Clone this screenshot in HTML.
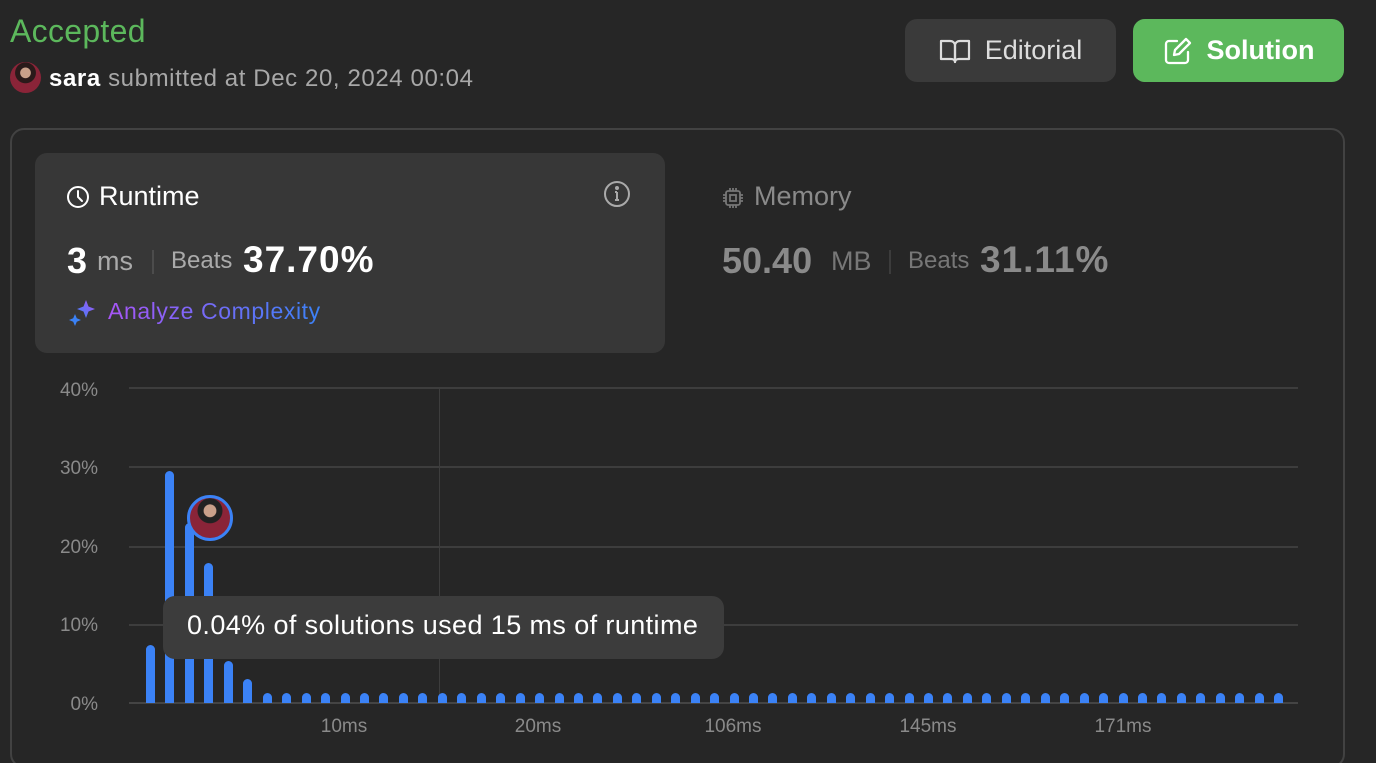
<!DOCTYPE html>
<html><head><meta charset="utf-8"><style>
*{margin:0;padding:0;box-sizing:border-box}
html,body{width:1376px;height:763px;overflow:hidden}
body{background:#262626;font-family:"Liberation Sans",sans-serif;position:relative;color:#eee}
.abs{position:absolute;white-space:nowrap}
.btn{position:absolute;top:19px;height:63px;border-radius:12px;display:flex;align-items:center;justify-content:center;font-size:27px;gap:14px}
.grid{position:absolute;left:129px;width:1169px;height:2px;background:#3d3d3d}
.yl{position:absolute;width:60px;left:38px;text-align:right;font-size:19px;color:#8a8a8a}
.xl{position:absolute;top:716px;font-size:19px;color:#8a8a8a;width:80px;text-align:center}
.bar{position:absolute;width:9px;background:#3b82f6;border-radius:5px 5px 0 0}
</style></head><body>
<div class="abs" style="left:10px;top:13px;font-size:32px;color:#5cb85c;letter-spacing:0.3px">Accepted</div>
<div class="abs" style="left:10px;top:62px;width:31px;height:31px;border-radius:50%;background:radial-gradient(circle at 50% 35%,#c9a08a 0 20%,#2a1a1a 22% 40%,#8a2438 42%);"></div>
<div class="abs" style="left:49px;top:65px;font-size:24px;letter-spacing:0.6px;color:#ddd"><b style="color:#fff">sara</b> <span style="color:#a8a8a8">submitted at Dec 20, 2024 00:04</span></div>

<div class="btn" style="left:905px;width:211px;background:#3a3a3a;color:#ddd">
<svg width="32" height="28" viewBox="0 0 32 28" fill="none" stroke="#ddd" stroke-width="2.2" stroke-linejoin="round"><path d="M2 4h9c3 0 5 2 5 5v16c0-2-2-3-4-3H2z"/><path d="M30 4h-9c-3 0-5 2-5 5v16c0-2 2-3 4-3h10z"/></svg>Editorial</div>
<div class="btn" style="left:1133px;width:211px;background:#5cb85c;color:#fff;font-weight:bold">
<svg width="30" height="30" viewBox="0 0 30 30" fill="none" stroke="#fff" stroke-width="2.3" stroke-linejoin="round" stroke-linecap="round"><path d="M14 5H6a3 3 0 0 0-3 3v16a3 3 0 0 0 3 3h16a3 3 0 0 0 3-3v-8"/><path d="M23 3l4 4-11 11-5 1 1-5z"/></svg>Solution</div>

<div class="abs" style="left:10px;top:128px;width:1335px;height:640px;border:2px solid #424242;border-radius:14px"></div>
<div class="abs" style="left:35px;top:153px;width:630px;height:200px;background:#373737;border-radius:12px"></div>
<svg class="abs" style="left:66px;top:185px" width="24" height="24" viewBox="0 0 24 24" fill="none" stroke="#fff" stroke-width="2"><circle cx="12" cy="12" r="10"/><path d="M12 6v6l4 4" stroke-linecap="round"/></svg>
<div class="abs" style="left:99px;top:181px;font-size:27px;color:#fff">Runtime</div>
<svg class="abs" style="left:603px;top:180px" width="28" height="28" viewBox="0 0 28 28" fill="none" stroke="#aaa" stroke-width="2"><circle cx="14" cy="14" r="12"/><path d="M14 12v8M12 12h2M12 20h4" /><circle cx="14" cy="8" r="1" fill="#aaa"/></svg>
<div class="abs" style="left:67px;top:240px;font-size:36px;font-weight:bold;color:#fff">3</div>
<div class="abs" style="left:97px;top:246px;font-size:27px;color:#aaa">ms</div>
<div class="abs" style="left:152px;top:250px;width:2px;height:24px;background:#4c4c4c"></div>
<div class="abs" style="left:171px;top:247px;font-size:24px;color:#aaa">Beats</div>
<div class="abs" style="left:243px;top:239px;font-size:37px;font-weight:bold;color:#fff;letter-spacing:1px">37.70%</div>
<svg class="abs" style="left:68px;top:298px" width="30" height="30" viewBox="0 0 30 30"><defs><linearGradient id="g" x1="0" y1="1" x2="1" y2="0"><stop offset="0" stop-color="#3b82f6"/><stop offset="1" stop-color="#a855f7"/></linearGradient></defs><path d="M18 2l2.5 6.5L27 11l-6.5 2.5L18 20l-2.5-6.5L9 11l6.5-2.5z" fill="url(#g)"/><path d="M7 16l1.8 4.2L13 22l-4.2 1.8L7 28l-1.8-4.2L1 22l4.2-1.8z" fill="#3b82f6"/></svg>
<div class="abs" style="left:108px;top:298px;font-size:23px;letter-spacing:0.6px;background:linear-gradient(90deg,#a855f7,#3b82f6);-webkit-background-clip:text;background-clip:text;color:transparent">Analyze Complexity</div>

<svg class="abs" style="left:721px;top:186px" width="24" height="24" viewBox="0 0 24 24" fill="none" stroke="#777" stroke-width="1.8"><rect x="5" y="5" width="14" height="14" rx="2"/><rect x="9" y="9" width="6" height="6"/><path d="M9 2v3M12 2v3M15 2v3M9 19v3M12 19v3M15 19v3M2 9h3M2 12h3M2 15h3M19 9h3M19 12h3M19 15h3"/></svg>
<div class="abs" style="left:754px;top:181px;font-size:27px;color:#8a8a8a">Memory</div>
<div class="abs" style="left:722px;top:240px;font-size:36px;font-weight:bold;color:#8a8a8a">50.40</div>
<div class="abs" style="left:831px;top:246px;font-size:27px;color:#777">MB</div>
<div class="abs" style="left:889px;top:250px;width:2px;height:24px;background:#3c3c3c"></div>
<div class="abs" style="left:908px;top:247px;font-size:24px;color:#777">Beats</div>
<div class="abs" style="left:980px;top:239px;font-size:37px;font-weight:bold;color:#8a8a8a;letter-spacing:1px">31.11%</div>

<div class="grid" style="top:387px"></div>
<div class="grid" style="top:466px"></div>
<div class="grid" style="top:546px"></div>
<div class="grid" style="top:624px"></div>
<div class="grid" style="top:702px;background:#444"></div>
<div class="abs" style="left:439px;top:388px;width:1px;height:315px;background:#3d3d3d"></div>
<div class="yl" style="top:380px">40%</div>
<div class="yl" style="top:458px">30%</div>
<div class="yl" style="top:537px">20%</div>
<div class="yl" style="top:615px">10%</div>
<div class="yl" style="top:694px">0%</div>
<div class="xl" style="left:304px">10ms</div>
<div class="xl" style="left:498px">20ms</div>
<div class="xl" style="left:693px">106ms</div>
<div class="xl" style="left:888px">145ms</div>
<div class="xl" style="left:1083px">171ms</div>

<div id="bars"></div>
<script>
var h=[58,232,180,140,42,24];var s='';
for(var i=0;i<59;i++){var x=146+i*19.45;var hh=i<6?h[i]:10;s+='<div class="bar" style="left:'+x.toFixed(1)+'px;top:'+(703-hh)+'px;height:'+hh+'px"></div>';}
document.getElementById('bars').innerHTML=s;
</script>
<div class="abs" style="left:187px;top:495px;width:46px;height:46px;border-radius:50%;border:3px solid #3b82f6;background:radial-gradient(circle at 50% 32%,#c9a08a 0 18%,#222 20% 36%,#8a2438 38%)"></div>
<div class="abs" style="left:163px;top:596px;width:561px;height:63px;background:#3c3c3c;border-radius:12px;font-size:27px;letter-spacing:0.4px;color:#fff;padding:14px 0 0 24px">0.04% of solutions used 15 ms of runtime</div>
</body></html>
